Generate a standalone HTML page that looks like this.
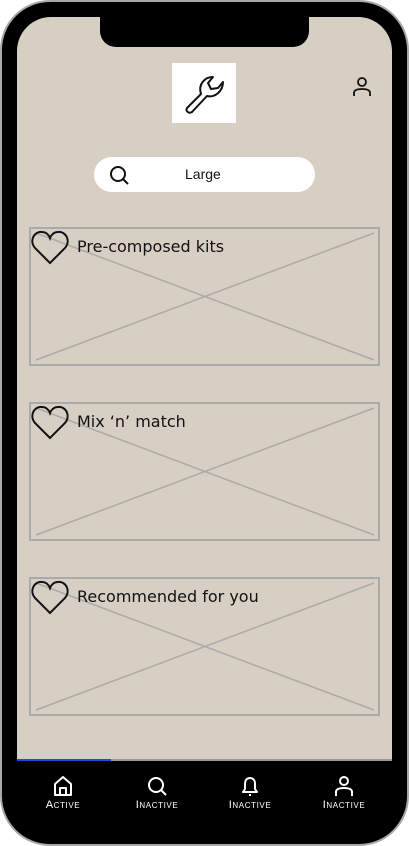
<!DOCTYPE html>
<html><head><style>
*{margin:0;padding:0;box-sizing:border-box}
body{width:409px;height:846px;background:#fff;position:relative;overflow:hidden;font-family:"Liberation Sans",sans-serif}
.frame{position:absolute;left:0;top:0;width:409px;height:846px;border-radius:50px;background:#000;border:2px solid #a8a8a8}
.screen{position:absolute;left:17px;top:17px;width:375px;height:744px;background:#d7cfc3;border-radius:34px 34px 0 0;overflow:hidden}
.notch{position:absolute;left:100px;top:17px;width:209px;height:30px;background:#000;border-radius:0 0 16px 16px}
.logo{position:absolute;left:172px;top:63px;width:64px;height:60px;background:#fff}
.search{position:absolute;left:94px;top:157px;width:221px;height:35px;background:#fff;border-radius:18px}
.search span{position:absolute;left:91px;top:9px;font-size:14px;color:#111}
.card{position:absolute;left:29px;width:351px;height:139px;border:2px solid #aaa}
.card svg.x{position:absolute;left:0;top:0}
.card .t{position:absolute;left:46px;top:8px;font-family:"Comic Sans MS","DejaVu Sans",sans-serif;font-size:16px;color:#111}
.card .h{position:absolute;left:0;top:0}
.bar{position:absolute;top:759px;height:2px}
.nav{position:absolute;top:775px;width:90px;text-align:center;color:#fff;font-size:11px;letter-spacing:0.6px;font-variant:small-caps}
.nav svg{display:block;margin:0 auto 2px}
</style></head><body>
<div class="frame"></div>
<div class="screen"></div>
<div class="notch"></div>
<div class="logo"><svg width="64" height="60" viewBox="0 0 64 60"><path d="M15 45 L29 31 C26 22 32 14 41 14 L36 20 L39 26 L46 25 L51 19 C51 28 43 35 35 33 L20 49 C17 51 13 48 15 45 Z" fill="none" stroke="#111" stroke-width="2" stroke-linejoin="round"/></svg></div>
<svg style="position:absolute;left:351px;top:76px" width="22" height="22" viewBox="0 0 22 22"><circle cx="11" cy="6" r="4" fill="none" stroke="#111" stroke-width="1.8"/><path d="M3 20 V17 C3 14 6 13 11 13 C16 13 19 14 19 17 V20" fill="none" stroke="#111" stroke-width="1.8"/></svg>
<div class="search"><svg style="position:absolute;left:14px;top:7px" width="22" height="22" viewBox="0 0 22 22"><circle cx="10" cy="10" r="7" fill="none" stroke="#111" stroke-width="2"/><path d="M15 15 L20 20" stroke="#111" stroke-width="2"/></svg><span>Large</span></div>

<div class="card" style="top:227px"><svg class="x" width="347" height="135"><path d="M5 4 L343 131 M5 131 L343 4" stroke="#aaa" stroke-width="1.5"/></svg><svg class="h" width="40" height="36" viewBox="0 0 40 36"><path d="M19 34 L4 19 C-2 12 3 2 11 3 C15 3 18 6 19 9 C20 6 23 3 27 3 C35 2 40 12 34 19 Z" fill="none" stroke="#111" stroke-width="2"/></svg><div class="t">Pre-composed kits</div></div>
<div class="card" style="top:402px"><svg class="x" width="347" height="135"><path d="M5 4 L343 131 M5 131 L343 4" stroke="#aaa" stroke-width="1.5"/></svg><svg class="h" width="40" height="36" viewBox="0 0 40 36"><path d="M19 34 L4 19 C-2 12 3 2 11 3 C15 3 18 6 19 9 C20 6 23 3 27 3 C35 2 40 12 34 19 Z" fill="none" stroke="#111" stroke-width="2"/></svg><div class="t">Mix ‘n’ match</div></div>
<div class="card" style="top:577px"><svg class="x" width="347" height="135"><path d="M5 4 L343 131 M5 131 L343 4" stroke="#aaa" stroke-width="1.5"/></svg><svg class="h" width="40" height="36" viewBox="0 0 40 36"><path d="M19 34 L4 19 C-2 12 3 2 11 3 C15 3 18 6 19 9 C20 6 23 3 27 3 C35 2 40 12 34 19 Z" fill="none" stroke="#111" stroke-width="2"/></svg><div class="t">Recommended for you</div></div>

<div class="bar" style="left:17px;width:94px;background:#1a4fd6"></div>
<div class="bar" style="left:111px;width:281px;background:#999"></div>

<div class="nav" style="left:18px"><svg width="22" height="22" viewBox="0 0 22 22"><path d="M3 20 V9 L11 2 L19 9 V20 Z M8 20 V13 H14 V20" fill="none" stroke="#fff" stroke-width="2" stroke-linejoin="round"/></svg>Active</div>
<div class="nav" style="left:112px"><svg width="22" height="22" viewBox="0 0 22 22"><circle cx="10" cy="10" r="7" fill="none" stroke="#fff" stroke-width="2"/><path d="M15 15 L20 20" stroke="#fff" stroke-width="2"/></svg>Inactive</div>
<div class="nav" style="left:205px"><svg width="22" height="22" viewBox="0 0 22 22"><path d="M4 17 H18 L16 14 V9 C16 5 14 3 11 3 C8 3 6 5 6 9 V14 Z M10 20 H12" fill="none" stroke="#fff" stroke-width="2" stroke-linejoin="round"/></svg>Inactive</div>
<div class="nav" style="left:299px"><svg width="22" height="22" viewBox="0 0 22 22"><circle cx="11" cy="6" r="4" fill="none" stroke="#fff" stroke-width="2"/><path d="M3 21 V17 C3 14 6 13 11 13 C16 13 19 14 19 17 V21" fill="none" stroke="#fff" stroke-width="2"/></svg>Inactive</div>
</body></html>
